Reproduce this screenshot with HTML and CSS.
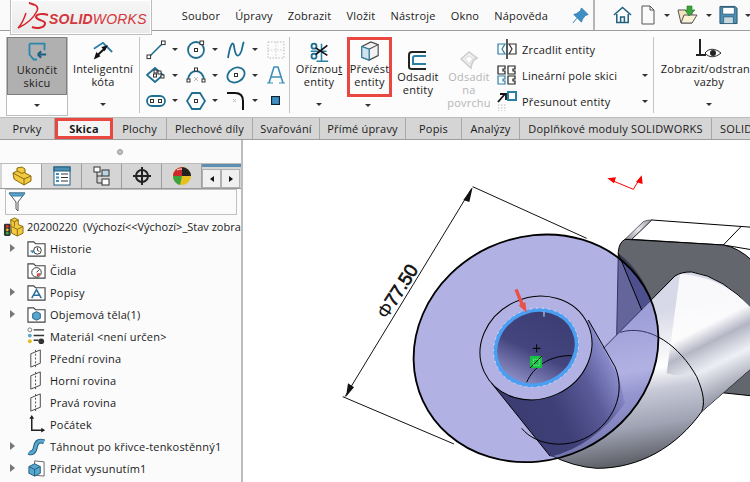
FILE: index.html
```html
<!DOCTYPE html>
<html lang="cs">
<head>
<meta charset="utf-8">
<title>SOLIDWORKS</title>
<link rel="stylesheet" href="styles.css">
</head>
<body>
<div class="app">
  <header class="topbar">
    <div class="logo">
      <svg class="ds" viewBox="0 0 32 28"><path d="M12 1 C19 2 22 5 20 9 C17 15 10 22 1 26 C5 22 7 17 9 11 M12 1 L17 3" fill="none" stroke="#d5252c" stroke-width="1.500"/><path d="M31 13 C26 11 19 12 19 15 C20 19 29 18 28 22 C27 26 20 27 15 25" fill="none" stroke="#d5252c" stroke-width="2"/></svg>
      <span class="logo-text"><b>SOLID</b>WORKS</span>
    </div>
    <nav class="menu"><span>Soubor</span><span>Úpravy</span><span>Zobrazit</span><span>Vložit</span><span>Nástroje</span><span>Okno</span><span>Nápověda</span></nav>
    <svg class="pin" viewBox="0 0 18 18"><path d="M10 1 L17 8 L14 9 L11 13 L10 16 L2 8 L5 7 L9 4 Z M5 12 L1 17" fill="#3f8fc4" stroke="#2e7fb5"/></svg>
    <div class="quick">
      <svg class="q-home" viewBox="0 0 20 20"><path d="M1 10 L10 2 L19 10 M4 9 V18 H16 V9 M8 18 V12 H12 V18" fill="#fff" stroke="#1f5f7f" stroke-width="1.600"/></svg>
      <svg class="q-doc" viewBox="0 0 16 20"><path d="M2 1 H10 L14 5 V19 H2 Z M10 1 V5 H14" fill="#fafafa" stroke="#555"/></svg>
      <i class="caret"></i>
      <svg class="q-open" viewBox="0 0 22 20"><path d="M1 5 H8 L10 7 H15 V18 H4 Z" fill="#f3e4bd" stroke="#555"/><path d="M4 18 L7 10 H20 L15 18 Z" fill="#fbf1d5" stroke="#555"/><path d="M10 1 H15 L15 5 H18 L12 11 L8 5 H10 Z" fill="#3aa53a" stroke="#1f7a1f" stroke-width=".6"/></svg>
      <i class="caret"></i>
      <svg class="q-save" viewBox="0 0 20 20"><path d="M1 1 H17 L19 3 V19 H1 Z" fill="#4d8fb3" stroke="#24536e"/><rect x="4" y="2" width="12" height="7" fill="#fff" stroke="#24536e" stroke-width=".7"/><rect x="5" y="12" width="10" height="7" fill="#c9d7df" stroke="#24536e" stroke-width=".7"/></svg>
      <i class="caret"></i>
    </div>
  </header>

  <section class="ribbon">
    <div class="rb end">
      <div class="end-main">
        <svg class="ic20" viewBox="0 0 24 24"><path d="M3 2 H21 V10 M3 2 V15 L8 21 H12" fill="none" stroke="#2b86ad" stroke-width="2.200"/><path d="M23 15 H13 M13 15 L17 11 M13 15 L17 19" stroke="#1d5f86" stroke-width="2.600" fill="none"/></svg>
        <span>Ukončit<br>skicu</span>
      </div>
      <div class="end-foot"><i class="caret"></i></div>
    </div>
    <div class="rb smart">
      <svg class="ic20" viewBox="0 0 24 24"><path d="M1 8 L12 1 L23 12" fill="none" stroke="#2b7fa5" stroke-width="2.200"/><path d="M4 17 L15 7" stroke="#111" stroke-width="2.400"/><path d="M1 21 L4 12 L9 17 Z M18 4 L10 6 L14 11 Z" fill="#111"/></svg>
      <span>Inteligentní<br>kóta</span>
      <i class="caret foot"></i>
    </div>
    <div class="vsep first"></div>
    <div class="tools">
      <div class="tool"><svg viewBox="0 0 20 20"><path d="M3 17 L17 3" stroke="#1f6f93" stroke-width="1.600"/><rect x="1" y="15" width="3.600" height="3.600" fill="#fff" stroke="#333"/><rect x="15.500" y="1" width="3.600" height="3.600" fill="#fff" stroke="#333"/></svg><i class="caret"></i></div>
      <div class="tool"><svg viewBox="0 0 20 20"><circle cx="10" cy="10" r="8" fill="none" stroke="#1f6f93" stroke-width="1.800"/><rect x="8.500" y="8.500" width="3" height="3" fill="#fff" stroke="#333"/><rect x="14" y="1" width="3.600" height="3.600" fill="#fff" stroke="#333"/></svg><i class="caret"></i></div>
      <div class="tool"><svg viewBox="0 0 20 20"><path d="M2 18 C4 5 7 0 8 6 C9 14 11 18 14 14 C17 10 16 4 18 2" fill="none" stroke="#1f6f93" stroke-width="1.800"/></svg><i class="caret"></i></div>
      <div class="tool"><svg viewBox="0 0 20 20"><rect x="2" y="2" width="16" height="16" fill="none" stroke="#bbb" stroke-dasharray="1.500 1.500"/><path d="M10 2 V18 M2 10 H18" stroke="#ccc" stroke-dasharray="1.500 1.500"/></svg></div>

      <div class="tool"><svg viewBox="0 0 20 20"><path d="M1 10 L9 3 L17 10 L9 17 Z" fill="none" stroke="#1f6f93" stroke-width="1.800"/><rect x="8" y="5" width="3" height="3" fill="#fff" stroke="#333"/><rect x="12" y="6" width="3" height="3" fill="#fff" stroke="#333"/><rect x="15" y="10" width="3" height="3" fill="#fff" stroke="#333"/><rect x="7.500" y="9" width="3" height="3" fill="#fff" stroke="#333"/></svg><i class="caret"></i></div>
      <div class="tool"><svg viewBox="0 0 20 20"><path d="M2 15 C3 3 17 3 18 15" fill="none" stroke="#1f6f93" stroke-width="1.800"/><rect x="8.500" y="3" width="3" height="3" fill="#fff" stroke="#333"/><rect x="1" y="14" width="3" height="3" fill="#fff" stroke="#333"/><rect x="16" y="14" width="3" height="3" fill="#fff" stroke="#333"/><path d="M8 12 L12 16 M12 12 L8 16" stroke="#bbb"/></svg><i class="caret"></i></div>
      <div class="tool"><svg viewBox="0 0 20 20"><ellipse cx="10" cy="10" rx="9" ry="7" transform="rotate(-30 10 10)" fill="none" stroke="#1f6f93" stroke-width="1.800"/><rect x="8.500" y="8.500" width="3" height="3" fill="#fff" stroke="#333"/></svg><i class="caret"></i></div>
      <div class="tool"><svg viewBox="0 0 20 20"><path d="M3 18 L8 2 H12 L17 18 M5 12 H15" fill="none" stroke="#3f8fb5" stroke-width="1.600"/><path d="M7 18 H1 M19 18 H13" stroke="#3f8fb5"/></svg></div>

      <div class="tool"><svg viewBox="0 0 20 20"><rect x="1" y="5" width="18" height="10" rx="5" fill="none" stroke="#1f6f93" stroke-width="1.800"/><rect x="4.500" y="8.500" width="3" height="3" fill="#fff" stroke="#333"/><rect x="12.500" y="8.500" width="3" height="3" fill="#fff" stroke="#333"/></svg><i class="caret"></i></div>
      <div class="tool"><svg viewBox="0 0 20 20"><path d="M6 2 H14 L19 10 L14 18 H6 L1 10 Z" fill="none" stroke="#1f6f93" stroke-width="1.800"/><rect x="8.500" y="8.500" width="3" height="3" fill="#fff" stroke="#333"/></svg><i class="caret"></i></div>
      <div class="tool"><svg viewBox="0 0 20 20"><path d="M1 2 H9 C14 2 17 5 17 10 V19" fill="none" stroke="#111" stroke-width="2"/><path d="M7 8 L10 11 M10 8 L7 11" stroke="#bbb"/></svg><i class="caret"></i></div>
      <div class="tool"><svg class="small" viewBox="0 0 8 8"><rect x=".5" y=".5" width="7" height="7" fill="#3f8fc4" stroke="#123"/></svg></div>
    </div>
    <div class="vsep second"></div>
    <div class="rb trim">
      <svg class="ic20" viewBox="0 0 24 24"><path d="M2 11 H21 M15 2 V23 M9 23 H23" stroke="#2b7fa5" stroke-width="1.800"/><circle cx="6" cy="5" r="3" fill="none" stroke="#1f6f93" stroke-width="2.200"/><circle cx="6" cy="17" r="3" fill="none" stroke="#1f6f93" stroke-width="2.200"/><path d="M8 7 L22 16 M8 15 L22 4" stroke="#111" stroke-width="2"/></svg>
      <span>Oříznou<u>t</u><br>entity</span>
      <i class="caret foot"></i>
    </div>
    <div class="rb convert">
      <svg class="ic20" viewBox="0 0 22 22"><path d="M2 6 L12 1 L20 4 V16 L10 21 L2 18 Z" fill="#f2f2f2" stroke="#444" stroke-width="1.200"/><path d="M2 6 L10 9 L20 4 M10 9 V21" fill="none" stroke="#444" stroke-width="1.200"/><path d="M10 9 V21 L2 18 V6 Z" fill="#cfe3ef" stroke="#2b7fa5" stroke-width="1.200"/></svg>
      <span>Převést<br>entity</span>
    </div>
    <i class="caret float-caret"></i>
    <div class="rb offset">
      <svg class="ic20" viewBox="0 0 20 20"><path d="M18 2 H4 C2 2 1 3 1 5 V17 C1 18 2 19 4 19 H18" fill="none" stroke="#222" stroke-width="2"/><path d="M18 6 H7 C6 6 5 7 5 8 V14 H18" fill="none" stroke="#2b7fa5" stroke-width="2"/></svg>
      <span>Odsadit<br>entity</span>
    </div>
    <div class="rb offset dim">
      <svg class="ic20" viewBox="0 0 20 20"><path d="M2 9 L10 2 L18 8 C15 9 13 11 12 18 Z" fill="#eee" stroke="#ccc" stroke-width="1.500"/><path d="M6 9 L10 6 L14 9 C12 10 11 12 11 14 Z" fill="#fff" stroke="#ddd"/></svg>
      <span>Odsadit<br>na<br>povrchu</span>
    </div>
    <div class="actions">
      <div class="action"><svg viewBox="0 0 20 20"><path d="M8 5 H1 V15 H8 L5 10 Z" fill="#fff" stroke="#2b7fa5" stroke-width="1.200"/><path d="M10 0 V20" stroke="#111" stroke-width="1.400"/><path d="M12 5 H19 V15 H12 L15 10 Z" fill="#fff" stroke="#333" stroke-width="1.200"/></svg><span>Zrcadlit entity</span></div>
      <div class="action"><svg viewBox="0 0 20 20"><path d="M1 1 H8 V4 H6 V6 H8 V9 H1 Z M11 1 H18 V4 H16 V6 H18 V9 H11 Z M11 11 H18 V14 H16 V16 H18 V19 H11 Z" fill="#fff" stroke="#222" stroke-width="1.200"/><path d="M1 11 H8 V14 H6 V16 H8 V19 H1 Z" fill="#fff" stroke="#2b7fa5" stroke-width="1.200"/></svg><span>Lineární pole skici</span><i class="caret"></i></div>
      <div class="action"><svg viewBox="0 0 20 20"><path d="M1 11 L8 3 M3 3 H9 V9" fill="none" stroke="#111" stroke-width="1.800"/><rect x="11" y="1" width="8" height="8" fill="#fff" stroke="#2b7fa5" stroke-width="2"/><path d="M1 14 H9 M1 17 H9 M1 20 H9" stroke="#bbb" stroke-dasharray="1.500 1.500"/></svg><span>Přesunout entity</span><i class="caret"></i></div>
    </div>
    <div class="vsep third"></div>
    <div class="rb relate">
      <svg class="ic-rel" viewBox="0 0 26 22"><path d="M4 1 V17 M0 17 H10" stroke="#222" stroke-width="2" fill="none"/><path d="M9 15 C13 10 19 10 25 15 C19 20 13 20 9 15 Z" fill="#fff" stroke="#222"/><circle cx="17" cy="15" r="3" fill="#222"/></svg>
      <span>Zobrazit/odstranit<br>vazby</span>
      <i class="caret foot"></i>
    </div>
  </section>

  <nav class="tabs">
    <span>Prvky</span><span class="active">Skica</span><span>Plochy</span><span>Plechové díly</span><span>Svařování</span><span>Přímé úpravy</span><span>Popis</span><span>Analýzy</span><span>Doplňkové moduly SOLIDWORKS</span><span class="last">SOLIDWORKS CAM</span>
  </nav>

  <main class="work">
    <aside class="side">
      <div class="grip"><i></i></div>
      <div class="side-tabs">
        <span class="stab on"><svg viewBox="0 0 20 20"><path d="M1 7 L5 5 V2 L10 1 L13 3 V7 L19 10 V15 L12 19 L2 13 Z" fill="#f3c93f" stroke="#8a6a10"/><path d="M1 7 L12 13 L19 10 M12 13 V19 M5 5 L10 7.500 L13 6" fill="none" stroke="#8a6a10"/></svg></span>
        <span class="stab"><svg viewBox="0 0 20 20"><rect x="2" y="1" width="16" height="18" fill="#fff" stroke="#1f5f7f"/><rect x="2" y="1" width="16" height="4" fill="#4d8fb3" stroke="#1f5f7f"/><path d="M4 8 H7 M4 11.500 H7 M4 15 H7" stroke="#3f8fc4" stroke-width="2"/><path d="M9 8 H16 M9 11.500 H16 M9 15 H16" stroke="#333"/></svg></span>
        <span class="stab"><svg viewBox="0 0 20 20"><path d="M5 4 V17 H10 M5 10 H10" fill="none" stroke="#333"/><rect x="2" y="1" width="6" height="5" fill="#fff" stroke="#333"/><rect x="10" y="4" width="7" height="6" fill="#b9d4e4" stroke="#333"/><rect x="10" y="13" width="7" height="6" fill="#fff" stroke="#333"/></svg></span>
        <span class="stab"><svg viewBox="0 0 20 20"><circle cx="10" cy="10" r="6" fill="none" stroke="#222" stroke-width="2"/><path d="M10 1 V19 M1 10 H19" stroke="#222" stroke-width="2"/></svg></span>
        <span class="stab"><svg viewBox="0 0 20 20"><circle cx="10" cy="10" r="9" fill="#e8c020"/><path d="M10 10 L10 1 A9 9 0 0 0 1 10 Z" fill="#cc2a2a"/><path d="M10 10 L1 10 A9 9 0 0 0 8 19 Z" fill="#3ca23c"/><path d="M10 10 L10 1 A9 9 0 0 1 19 10 Z" fill="#222"/><path d="M5 4 A9 9 0 0 1 10 3" stroke="#fff" fill="none"/></svg></span>
        <div class="stab-end"><i class="arrow left"></i><i class="arrow right"></i></div>
      </div>
      <div class="filter"><svg viewBox="0 0 18 20"><path d="M1 1 H17 L10 10 V19 L8 17 V10 Z" fill="#fff" stroke="#555"/><path d="M1 1 H17 L14.500 4 H3.500 Z" fill="#5aa6cf" stroke="#3a7ea5"/></svg></div>
      <ul class="tree">
        <li class="root"><svg viewBox="0 0 22 22"><rect x="1" y="8" width="7" height="13" rx="1.500" fill="#333"/><circle cx="4.500" cy="11" r="1.500" fill="#e03030"/><circle cx="4.500" cy="14.500" r="1.500" fill="#e8c020"/><circle cx="4.500" cy="18" r="1.500" fill="#30b030"/><path d="M8 4 L12 2 L16 4 V9 L21 11 V18 L15 21 L9 18 Z" fill="#f3c93f" stroke="#8a6a10"/><path d="M8 4 L12 6 L16 4 M12 6 V11 M9 11 L15 14 L21 11 M15 14 V21" fill="none" stroke="#8a6a10"/></svg><span>20200220  (Výchozí&lt;&lt;Výchozí&gt;_Stav zobrazení 1&gt;)</span></li>
        <li><i class="twist"></i><svg viewBox="0 0 20 20"><path d="M1 18 V3 H7 L9 5 H19 V18 Z" fill="#fff" stroke="#444" stroke-width="1.200"/><circle cx="11" cy="12" r="4" fill="#fff" stroke="#333"/><path d="M11 9 V12 L13 13" stroke="#333" fill="none"/><path d="M3 12 H8 L6 15 Z" fill="#2b7fa5"/></svg><span>Historie</span></li>
        <li><svg viewBox="0 0 20 20"><path d="M1 18 V3 H7 L9 5 H19 V18 Z" fill="#fff" stroke="#444" stroke-width="1.200"/><circle cx="10" cy="12" r="5" fill="#fff" stroke="#333"/><path d="M10 12 L13 9" stroke="#333"/><path d="M10 16 A4 4 0 0 0 14 13 L11 13 Z" fill="#d33"/></svg><span>Čidla</span></li>
        <li><i class="twist"></i><svg viewBox="0 0 20 20"><path d="M1 18 V3 H7 L9 5 H19 V18 Z" fill="#fff" stroke="#444" stroke-width="1.200"/><path d="M5 16 L10 7 L15 16 M7 13 H13" fill="none" stroke="#2b6f9a" stroke-width="1.600"/></svg><span>Popisy</span></li>
        <li><i class="twist"></i><svg viewBox="0 0 20 20"><path d="M1 18 V3 H7 L9 5 H19 V18 Z" fill="#fff" stroke="#444" stroke-width="1.200"/><path d="M6 9 L10 7 L14 9 V14 L10 16 L6 14 Z" fill="#5aa6cf" stroke="#1f5f7f"/></svg><span>Objemová těla(1)</span></li>
        <li><svg viewBox="0 0 20 20"><circle cx="3" cy="3" r="2" fill="#fff" stroke="#777"/><circle cx="3" cy="9" r="2" fill="#5aa6cf"/><circle cx="3" cy="15" r="2" fill="#e8b820"/><path d="M7 3 H18 M7 9 H18 M7 14 H12" stroke="#333" stroke-width="1.500"/><circle cx="15" cy="15" r="3" fill="#333"/></svg><span>Materiál &lt;není určen&gt;</span></li>
        <li><svg viewBox="0 0 20 20"><path d="M4 5 L14 1 V15 L4 19 Z" fill="none" stroke="#444"/><path d="M9 1 V19" stroke="#444" stroke-dasharray="2 2"/></svg><span>Přední rovina</span></li>
        <li><svg viewBox="0 0 20 20"><path d="M4 5 L14 1 V15 L4 19 Z" fill="none" stroke="#444"/><path d="M9 1 V19" stroke="#444" stroke-dasharray="2 2"/></svg><span>Horní rovina</span></li>
        <li><svg viewBox="0 0 20 20"><path d="M4 5 L14 1 V15 L4 19 Z" fill="none" stroke="#444"/><path d="M9 1 V19" stroke="#444" stroke-dasharray="2 2"/></svg><span>Pravá rovina</span></li>
        <li><svg viewBox="0 0 20 20"><path d="M5 3 V16 H18" fill="none" stroke="#222" stroke-width="1.600"/><path d="M5 0 L2.500 4 H7.500 Z M19 16 L15 13.500 V18.500 Z" fill="#222"/></svg><span>Počátek</span></li>
        <li><i class="twist"></i><svg viewBox="0 0 20 20"><path d="M2 16 C5 18 8 16 9 10 C10 5 13 3 18 5" fill="none" stroke="#1f5f7f" stroke-width="5"/><path d="M2 16 C5 18 8 16 9 10 C10 5 13 3 18 5" fill="none" stroke="#5aa6cf" stroke-width="3"/></svg><span>Táhnout po křivce-tenkostěnný1</span></li>
        <li><i class="twist"></i><svg viewBox="0 0 20 20"><path d="M8 2 L18 3 V18 L8 17 Z" fill="#fff" stroke="#666"/><path d="M2 8 L8 5 L14 8 V15 L8 18 L2 15 Z" fill="#5aa6cf" stroke="#1f5f7f"/><path d="M2 8 L8 11 L14 8 M8 11 V18" fill="none" stroke="#1f5f7f"/></svg><span>Přidat vysunutím1</span></li>
      </ul>
    </aside>
    <div class="canvas">
      <svg class="scene" viewBox="243 140 507 342">
        <defs>
          <linearGradient id="pipe" gradientUnits="userSpaceOnUse" x1="930" y1="430" x2="1000" y2="890">
            <stop offset="0" stop-color="#d8d9e8"/><stop offset=".36" stop-color="#ffffff"/><stop offset=".5" stop-color="#c8cad8"/><stop offset=".72" stop-color="#a0a3b3"/><stop offset="1" stop-color="#4f5157"/>
          </linearGradient>
          <linearGradient id="pipe2" gradientUnits="userSpaceOnUse" x1="1120" y1="340" x2="1270" y2="640">
            <stop offset="0" stop-color="#ffffff"/><stop offset=".35" stop-color="#ffffff"/><stop offset=".5" stop-color="#a9abbb"/><stop offset=".7" stop-color="#eceef5"/><stop offset="1" stop-color="#8e91a0"/>
          </linearGradient>
          <linearGradient id="boss" gradientUnits="userSpaceOnUse" x1="520" y1="740" x2="870" y2="570">
            <stop offset="0" stop-color="#3a3b70"/><stop offset=".4" stop-color="#3f4078"/><stop offset=".7" stop-color="#5a5b98"/><stop offset="1" stop-color="#9a9bdc"/>
          </linearGradient>
          <linearGradient id="hole" gradientUnits="userSpaceOnUse" x1="520" y1="620" x2="700" y2="470">
            <stop offset="0" stop-color="#9797cf"/><stop offset=".5" stop-color="#44457f"/><stop offset="1" stop-color="#3d3e74"/>
          </linearGradient>
          <linearGradient id="bevel" x1="0" y1="1" x2="1" y2="0">
            <stop offset="0" stop-color="#8f9198"/><stop offset=".5" stop-color="#e8e8ee"/><stop offset="1" stop-color="#9b9da5"/>
          </linearGradient>
        </defs>
        <g transform="translate(330 170) scale(.33333)">
          <path d="M965 150 L1270 172 V240 L1180 225 L905 208 Z" fill="#fff" stroke="#000" stroke-width="3"/>
          <path d="M885 208 L940 155 Q950 150 965 150 L905 208 Z" fill="url(#bevel)" stroke="#222" stroke-width="2"/>
          <path d="M1235 168 L1180 225" stroke="#000" stroke-width="3"/>
          <path d="M885 208 L1180 225 Q1225 232 1270 275 V678 L1175 668 L860 500 L865 245 Q867 218 885 208 Z" fill="#64666e" stroke="#000" stroke-width="3"/>
          <path d="M820 535 L1035 318 Q1055 305 1085 306 Q1180 320 1270 420 V590 L1115 725 C1040 830 930 895 800 895 Q730 890 660 855 Z" fill="url(#pipe)" stroke="#000" stroke-width="3"/>
          <path d="M1050 312 Q1180 320 1270 420 V590 L1115 725 Q1125 680 1090 610 L1180 520 Q1100 640 1010 610 Z" fill="url(#pipe2)" opacity=".85"/>
          <path d="M870 487 C960 460 1050 530 1100 620 C1122 670 1125 700 1115 725" fill="none" stroke="#000" stroke-width="3"/>
          <path d="M868 252 Q930 300 963 385 L935 420 Z" fill="#393a52"/>
          <ellipse cx="618" cy="535" rx="374" ry="334" transform="rotate(-25 618 535)" fill="#6464c8" fill-opacity=".5" stroke="#000" stroke-width="5.500"/>
          <path d="M865 250 L935 420" stroke="#000" stroke-width="3"/>
          <path d="M485 640 L662 860 Q790 830 885 700 L866 620 L775 450 Z" fill="url(#boss)"/>
          <path d="M485 640 L660 858 M775 450 L855 590" stroke="#000" stroke-width="3" fill="none"/>
          <path d="M575 775 C620 830 720 840 790 790 C860 740 885 660 855 590" fill="none" stroke="#000" stroke-width="3"/>
          <ellipse cx="618" cy="534" rx="171" ry="152" transform="rotate(-25 618 534)" fill="#b1b1e3" stroke="#000" stroke-width="3"/>
          <ellipse cx="618" cy="533" rx="124" ry="110" transform="rotate(-25 618 533)" fill="url(#hole)"/>
          <path d="M590 637 C610 590 660 555 725 557" fill="none" stroke="#000" stroke-width="3"/>
          <ellipse cx="618" cy="533" rx="124" ry="110" transform="rotate(-25 618 533)" fill="none" stroke="#4a9ff2" stroke-width="11"/>
          <ellipse cx="618" cy="533" rx="130" ry="116" transform="rotate(-25 618 533)" fill="none" stroke="#fff" stroke-width="1.500" stroke-dasharray="6 12"/>
          <path d="M642 425 V440" stroke="#cfe6ff" stroke-width="3"/>
          <rect x="600" y="558" width="36" height="36" fill="#14c43e"/>
          <path d="M600 594 L636 558" stroke="#000" stroke-width="3"/>
          <path d="M610 568 H628 V586 H610 Z" fill="none" stroke="#fff" stroke-width="2" stroke-dasharray="3 3"/>
          <path d="M620 523 V547 M608 535 H632" stroke="#000" stroke-width="3"/>
          <path d="M558 358 L576 402" stroke="#e8504a" stroke-width="10"/>
          <path d="M590 428 L566 406 L586 396 Z" fill="#e8504a"/>
          <path d="M428 50 L770 205 M38 680 L372 822" stroke="#111" stroke-width="3"/>
          <path d="M425 55 L45 680" stroke="#111" stroke-width="3"/>
          <path d="M428 52 L400 90 L418 96 Z M48 680 L54 640 L72 652 Z" fill="#111"/>
          <text class="dim-text" transform="translate(170 450) rotate(-57.500)"><tspan class="phi">Φ</tspan>77.50</text>
          <path d="M910 58 L850 33 M910 58 L928 28" stroke="#f00" stroke-width="3"/>
          <path d="M832 25 L858 22 L852 40 Z M935 16 L938 42 L918 36 Z" fill="#f00"/>
        </g>
      </svg>
    </div>
  </main>
</div>
</body>
</html>
```

FILE: styles.css
```css
* { box-sizing: border-box; }
html, body { margin: 0; padding: 0; height: 100%; }
body { font-family: "Open Sans", "Noto Sans", sans-serif; font-size: 11px; letter-spacing: .2px; color: #1a1a1a; background: #fff; overflow: hidden; }
.app { width: 750px; height: 482px; display: flex; flex-direction: column; overflow: hidden; }
.caret { display: inline-block; width: 0; height: 0; border-left: 3.5px solid transparent; border-right: 3.5px solid transparent; border-top: 3.5px solid #333; flex: none; }

/* top bar */
.topbar { height: 31px; flex: none; display: flex; align-items: center; background: #fafafa; border-bottom: 1px solid #9d9d9d; position: relative; z-index: 2; }
.logo { width: 145px; height: 35px; margin: 0 0 0 10px; align-self: flex-start; display: flex; align-items: center; gap: 0; padding: 0 4px 3px 6px; background: linear-gradient(#f7f7f7, #e9e9e9); border: 1px solid #bdbdbd; border-top: 0; box-shadow: inset 0 0 0 1px #fff; }
.ds { width: 32px; height: 28px; flex: none; }
.logo-text { font-family: "Liberation Sans", sans-serif; font-style: italic; font-size: 14px; color: #d5353b; letter-spacing: .2px; white-space: nowrap; margin-left: 0; padding-top: 6px; }
.logo-text b { font-weight: 700; }
.menu { display: flex; gap: 15px; margin-left: 28px; padding-left: 2px; font-size: 11px; white-space: nowrap; }
.pin { width: 17px; height: 17px; flex: none; margin-left: 24px; }
.quick { display: flex; align-items: center; align-self: stretch; margin-left: 4px; padding-left: 18px; border-left: 2px solid #b5b5b5; }
.q-home { width: 19px; height: 20px; }
.q-doc { width: 16px; height: 20px; margin: 0 8px 0 8px; }
.q-open { width: 22px; height: 20px; margin: 0 7px 0 7px; }
.q-save { width: 19px; height: 20px; margin: 0 7px 0 7px; }

/* ribbon */
.ribbon { height: 86px; flex: none; display: flex; align-items: flex-start; padding: 6px 0 0 6px; background: #fcfcfc; position: relative; }
.rb { display: flex; flex-direction: column; align-items: center; text-align: center; line-height: 13px; flex: none; white-space: nowrap; }
.ic20 { width: 20px; height: 20px; display: block; }
.end { width: 62px; height: 79px; border: 1px solid #bdbdbd; }
.end-main { width: 100%; height: 58px; background: #b0b0b0; border: 1px solid #7f7f7f; padding-top: 4px; display: flex; flex-direction: column; align-items: center; gap: 1px; margin: -1px 0 0; }
.end-foot { flex: 1; display: flex; align-items: center; justify-content: center; width: 100%; background: #fff; }
.smart { width: 62px; height: 79px; margin-left: 4px; padding-top: 5px; gap: 0; position: relative; }
.foot { position: absolute; left: 50%; margin-left: -3.5px; bottom: 10px; }
.vsep { width: 1px; height: 76px; background: #c4c4c4; flex: none; }
.vsep.first { margin: 0 6px 0 5px; }
.vsep.second { margin: 0 7px 0 2px; }
.vsep.third { margin: 0 8px 0 3px; }
.tools { width: 141px; display: grid; grid-template-columns: 40px 40px 40px 21px; grid-auto-rows: 25.5px; flex: none; }
.tool { display: flex; align-items: center; gap: 6px; }
.tool svg { width: 20px; height: 20px; flex: none; }
.tool svg.small { width: 9px; height: 9px; margin-left: 5px; }
.trim { width: 44px; height: 79px; padding-top: 5px; gap: 0; position: relative; }
.convert { width: 45px; height: 60px; margin-left: 6px; padding: 4px 3px 0; gap: 1px; outline: 3px solid #e8483f; outline-offset: -3px; justify-content: flex-start; }
.float-caret { position: absolute; left: 365px; top: 73px; }
.offset { width: 46px; margin-left: 3px; padding-top: 13px; gap: 0; }
.offset.dim { margin-left: 5px; color: #b5b5b5; }
.actions { width: 153px; margin: -1px 0 0 5px; display: flex; flex-direction: column; flex: none; }
.action { height: 26px; display: flex; align-items: center; gap: 5px; white-space: nowrap; }
.action svg { width: 20px; height: 20px; flex: none; }
.action span { flex: 1; }
.action .caret { margin-right: 2px; }
.relate { width: 94px; height: 79px; padding-top: 1px; position: relative; gap: 2px; }
.ic-rel { width: 26px; height: 22px; }

/* tabs */
.tabs { height: 23px; flex: none; display: grid; grid-template-columns: 55px 58px 54px 86px 67px 86px 56px 58px 192px 100px; background: #d5d5d5; border-top: 1px solid #bcbcbc; border-bottom: 1px solid #9d9d9d; position: relative; }
.tabs span { display: flex; align-items: center; justify-content: center; border-right: 1px solid #a8a8a8; white-space: nowrap; overflow: hidden; font-size: 11px; }
.tabs .last { justify-content: flex-start; padding-left: 8px; border: 0; }
.tabs .active { background: #f5f5f5; font-weight: 700; outline: 3px solid #e8483f; outline-offset: -3px; border: 0; }

/* work area */
.work { flex: 1; min-height: 0; display: flex; }
.side { width: 243px; flex: none; background: #fbfbfb; border-right: 2px solid #bdbdbd; display: flex; flex-direction: column; overflow: hidden; }
.grip { height: 24px; flex: none; display: flex; align-items: center; justify-content: center; border-bottom: 1px solid #bdbdbd; padding-right: 1px; }
.grip i { width: 6px; height: 6px; border-radius: 50%; background: #c2c2c2; border: 1px solid #999; }
.side-tabs { height: 25px; flex: none; display: flex; padding-left: 2px; background: #d5d5d5; border-bottom: 1px solid #999; position: relative; overflow: hidden; }
.stab { width: 40px; display: flex; align-items: center; justify-content: center; border-right: 1px solid #9d9d9d; flex: none; }
.stab.on { background: #fbfbfb; }
.stab svg { width: 20px; height: 20px; }
.stab-end { flex: 1; display: flex; align-items: flex-end; border-top: 3px solid #5f8fb0; background: #d5d5d5; }
.arrow { width: 19px; height: 19px; background: #f0f0f0; border: 1px solid #b0b0b0; display: flex; align-items: center; justify-content: center; }
.arrow.left::after { content: ""; border-top: 3.5px solid transparent; border-bottom: 3.5px solid transparent; border-right: 4px solid #111; }
.arrow.right::after { content: ""; border-top: 3.5px solid transparent; border-bottom: 3.5px solid transparent; border-left: 4px solid #111; }
.filter { height: 26px; flex: none; margin: 0 4px 0 5px; border: 1px solid #c0c0c0; background: #fbfbfb; display: flex; align-items: center; padding-left: 2px; }
.filter svg { width: 18px; height: 20px; }
.tree { list-style: none; margin: 0; padding: 0; }
.tree li { height: 22px; display: flex; align-items: center; padding-left: 27px; position: relative; white-space: nowrap; overflow: hidden; }
.tree li svg { width: 19px; height: 19px; flex: none; margin-right: 4px; }
.tree li.root { padding-left: 3px; height: 22px; letter-spacing: 0; }
.tree li.root svg { width: 21px; height: 21px; margin-right: 3px; }
.tree li.root span { white-space: pre; }
.twist { position: absolute; left: 10px; top: 7px; border-top: 4px solid transparent; border-bottom: 4px solid transparent; border-left: 5px solid #777; }
.canvas { flex: 1; min-width: 0; background: #fff; }
.scene { display: block; width: 100%; height: 100%; }
.dim-text { font-family: "Liberation Sans", sans-serif; font-size: 56px; letter-spacing: -1px; fill: #111; stroke: #111; stroke-width: 2; }
.phi { font-weight: 400; stroke-width: 0; }
```
